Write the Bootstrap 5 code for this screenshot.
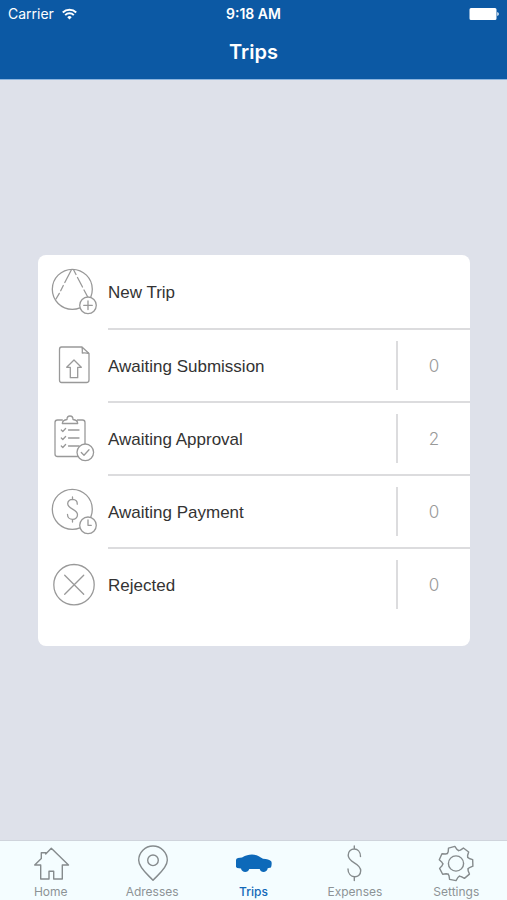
<!DOCTYPE html>
<html lang="en">
<head>
<meta charset="utf-8">
<meta name="viewport" content="width=device-width, initial-scale=1">
<title>Trips</title>
<link href="https://cdn.jsdelivr.net/npm/bootstrap@5.3.0/dist/css/bootstrap.min.css" rel="stylesheet">
<style>
body { background: #dee1ea; font-family: Inter, "Liberation Sans", sans-serif; }
svg { fill: none; stroke: #999; stroke-width: 1.3; stroke-linejoin: round; stroke-linecap: round; display: block; flex: none; }
.top-bar { background: #0c59a4; border-bottom: 1px solid #8db5df; }
.status { font-size: 14px; line-height: 28px; padding: 0 8px; }
.status > * { flex: 1 1 0; }
.status .wifi { stroke: #fff; stroke-width: 2; stroke-linecap: butt; }
.status .solid { fill: #fff; stroke: none; }
.top-bar h1 { font-size: 20px; line-height: 24px; padding: 12px 0 15px; }
.content { padding: 0 37px 19px 38px; }
.trip-menu { border-radius: 8px; padding-bottom: 24px; }
.entry { height: 73px; color: #333; font: 17px/24px "Liberation Sans", Arial, sans-serif; }
.entry:first-child { height: 75px; }
.entry-body { border-bottom: 2px solid #dcdcde; }
.entry-label { padding-top: 2px; }
.entry:last-child .entry-body { border-color: transparent; }
.count { width: 74px; height: 49px; border-left: 2px solid #dcdcde; color: #999; font: 300 17px/24px Inter, sans-serif; }
.tabs { background: #f4fdff; border-top: 1px solid #cfd4dc; height: 60px; }
.tab { color: #8d9396; font-size: 12px; line-height: 16px; padding-top: 4px; }
.tab svg { stroke: #858b8d; stroke-width: 1.4; margin-bottom: 1px; }
.tab.current { color: #1268b8; font-weight: 500; }
.tab .solid { fill: #0d69b9; stroke: none; }
</style>
</head>
<body class="d-flex flex-column min-vh-100">
<header class="top-bar text-white">
  <div class="status d-flex align-items-center">
    <div class="d-flex align-items-center gap-2">Carrier
      <svg class="wifi" width="15" height="12" viewBox="0 0 15 12"><path d="M.8 4.500a9.500 9.500 0 0 1 13.400 0M3.200 7.100a6.100 6.100 0 0 1 8.600 0"/><path class="solid" d="M7.500 11.500 5.300 9.200a3.100 3.100 0 0 1 4.400 0z"/></svg>
    </div>
    <div class="text-center fw-semibold">9:18 AM</div>
    <div class="d-flex justify-content-end">
      <svg width="30" height="12" viewBox="0 0 30 12"><path class="solid" d="M2 0h24q1.500 0 1.500 1.500v9q0 1.500-1.500 1.500H2Q.5 12 .5 10.500v-9Q.5 0 2 0zM28.300 4q1.500.5 1.500 2t-1.500 2z"/></svg>
    </div>
  </div>
  <h1 class="text-center fw-semibold m-0">Trips</h1>
</header>

<main class="content flex-grow-1 d-flex flex-column justify-content-center">
  <div class="trip-menu bg-white overflow-hidden">
    <a href="#new" class="entry d-flex text-decoration-none">
      <svg width="70" height="73" viewBox="38 255 70 73"><circle cx="72.300" cy="289.300" r="20"/><path d="m71.300 270-6.500 12.500m-1.500 3-2.600 5.200m-1.400 2.700L56 299M73.700 270l2.300 4.500m1.500 3 5 9.500m1.500 3 3.500 6.500"/><circle cx="88" cy="305.300" r="8.300" fill="#fff"/><path d="M88 301v8.600M83.700 305.300h8.600"/></svg>
      <div class="entry-body flex-grow-1 d-flex align-items-center"><span class="entry-label">New Trip</span></div>
    </a>
    <a href="#submission" class="entry d-flex text-decoration-none">
      <svg width="70" height="73" viewBox="38 330 70 73"><path d="M61.500 347H82l7 6.500V380q0 2.500-2.500 2.500h-25q-2 0-2-2.500v-30.500q0-2.500 2-2.500zM82 347q.5 3 .3 6 3.200-.5 6.700.5M74 360l7.300 7.300h-3.600v10.400h-7.400v-10.400h-3.600z"/></svg>
      <div class="entry-body flex-grow-1 d-flex align-items-center"><span class="entry-label flex-grow-1">Awaiting Submission</span><span class="count d-flex align-items-center justify-content-center">0</span></div>
    </a>
    <a href="#approval" class="entry d-flex text-decoration-none">
      <svg width="70" height="73" viewBox="38 403 70 73"><path d="M62.300 420h-4.800q-2.500 0-2.500 2.500V454q0 2.500 2.500 2.500h25q2.500 0 2.500-2.500v-31.500q0-2.500-2.500-2.500h-5.100M62.300 423.500q.3-3.500 4.700-4 0-3.500 3-3.500t3 3.500q4.500.5 4.700 4zM61.300 430l1.500 1.500 2.800-3M61.300 438l1.500 1.500 2.800-3M61.300 446l1.500 1.500 2.800-3M68.500 430h10.500M68.500 438h10.500M68.500 446h10.500"/><circle cx="85.300" cy="452.300" r="8.300" fill="#fff"/><path d="m81.300 452.500 2.700 2.700 5-5.400"/></svg>
      <div class="entry-body flex-grow-1 d-flex align-items-center"><span class="entry-label flex-grow-1">Awaiting Approval</span><span class="count d-flex align-items-center justify-content-center">2</span></div>
    </a>
    <a href="#payment" class="entry d-flex text-decoration-none">
      <svg width="70" height="73" viewBox="38 476 70 73"><circle cx="72.300" cy="509.300" r="20"/><path d="M72.500 497v2.500m0 20v2.500M77.300 504.200c0-6.400-9.600-6.200-9.600-.6 0 6 9.800 5 9.800 11.200 0 6.400-10 6-10-.4"/><circle cx="88" cy="525.300" r="8.300" fill="#fff"/><path d="M88 520v5.300h3.300"/></svg>
      <div class="entry-body flex-grow-1 d-flex align-items-center"><span class="entry-label flex-grow-1">Awaiting Payment</span><span class="count d-flex align-items-center justify-content-center">0</span></div>
    </a>
    <a href="#rejected" class="entry d-flex text-decoration-none">
      <svg width="70" height="73" viewBox="38 549 70 73"><circle cx="74" cy="584.700" r="20.200"/><path d="m64.700 575.300 19 19m0-19-19 19"/></svg>
      <div class="entry-body flex-grow-1 d-flex align-items-center"><span class="entry-label flex-grow-1">Rejected</span><span class="count d-flex align-items-center justify-content-center">0</span></div>
    </a>
  </div>
</main>

<nav class="tabs row g-0 text-center">
  <a href="#home" class="tab col text-decoration-none"><svg class="mx-auto" width="40" height="38" viewBox="31 845 40 38"><path d="M51.300 848.300 68.500 865h-6.200v14h-8.600v-7.700H49v7.700h-8.300v-14h-6l6.600-6.500v-5.800h4.400v1.300z"/></svg>Home</a>
  <a href="#addresses" class="tab col text-decoration-none"><svg class="mx-auto" width="40" height="38" viewBox="132 845 40 38"><path d="M153 880.300c-3.500-4.200-14.300-12-14.300-20a14.300 14.300 0 0 1 28.600 0c0 8-10.800 15.800-14.300 20z"/><circle cx="153" cy="860.300" r="5.300"/></svg>Adresses</a>
  <a href="#trips" class="tab current col text-decoration-none" aria-current="page"><svg class="mx-auto" width="40" height="38" viewBox="234 845 40 38"><path class="solid" d="M236 860q0-1.800 2-2.100l4-.4c4-2 6.500-2.900 10-2.900 5 0 7.500 1.900 11 4.200 4 .2 6.500 1 8.200 2.400.8 1.500.5 3.800-.2 6.300l-3.300.8c-.6 4.800-7.200 4.800-8 .7h-10.500c-.8 4.200-7.600 4-8.200-.4l-3.800-.6q-1.600-.5-1.200-2.500z"/></svg>Trips</a>
  <a href="#expenses" class="tab col text-decoration-none"><svg class="mx-auto" width="40" height="38" viewBox="335 845 40 38"><path d="M354.300 846v3m0 28v3.500M360.500 856.500c0-10-12.300-9.500-12.300-1.200 0 8 12.500 7 12.500 15.500 0 8.500-12.700 8-12.700-1.800"/></svg>Expenses</a>
  <a href="#settings" class="tab col text-decoration-none"><svg class="mx-auto" width="40" height="38" viewBox="-20 -18.500 40 38"><defs><path id="tooth" d="M11.900-5.700 13.400-4.500 16.800-3.300V3.300L13.400 4.500 11.900 5.700"/></defs><use href="#tooth" transform="rotate(-2)"/><use href="#tooth" transform="rotate(49.400)"/><use href="#tooth" transform="rotate(100.900)"/><use href="#tooth" transform="rotate(152.300)"/><use href="#tooth" transform="rotate(203.700)"/><use href="#tooth" transform="rotate(255.100)"/><use href="#tooth" transform="rotate(306.600)"/><circle r="7.600"/></svg>Settings</a>
</nav>
<script src="https://cdn.jsdelivr.net/npm/bootstrap@5.3.0/dist/js/bootstrap.bundle.min.js"></script>
</body>
</html>
